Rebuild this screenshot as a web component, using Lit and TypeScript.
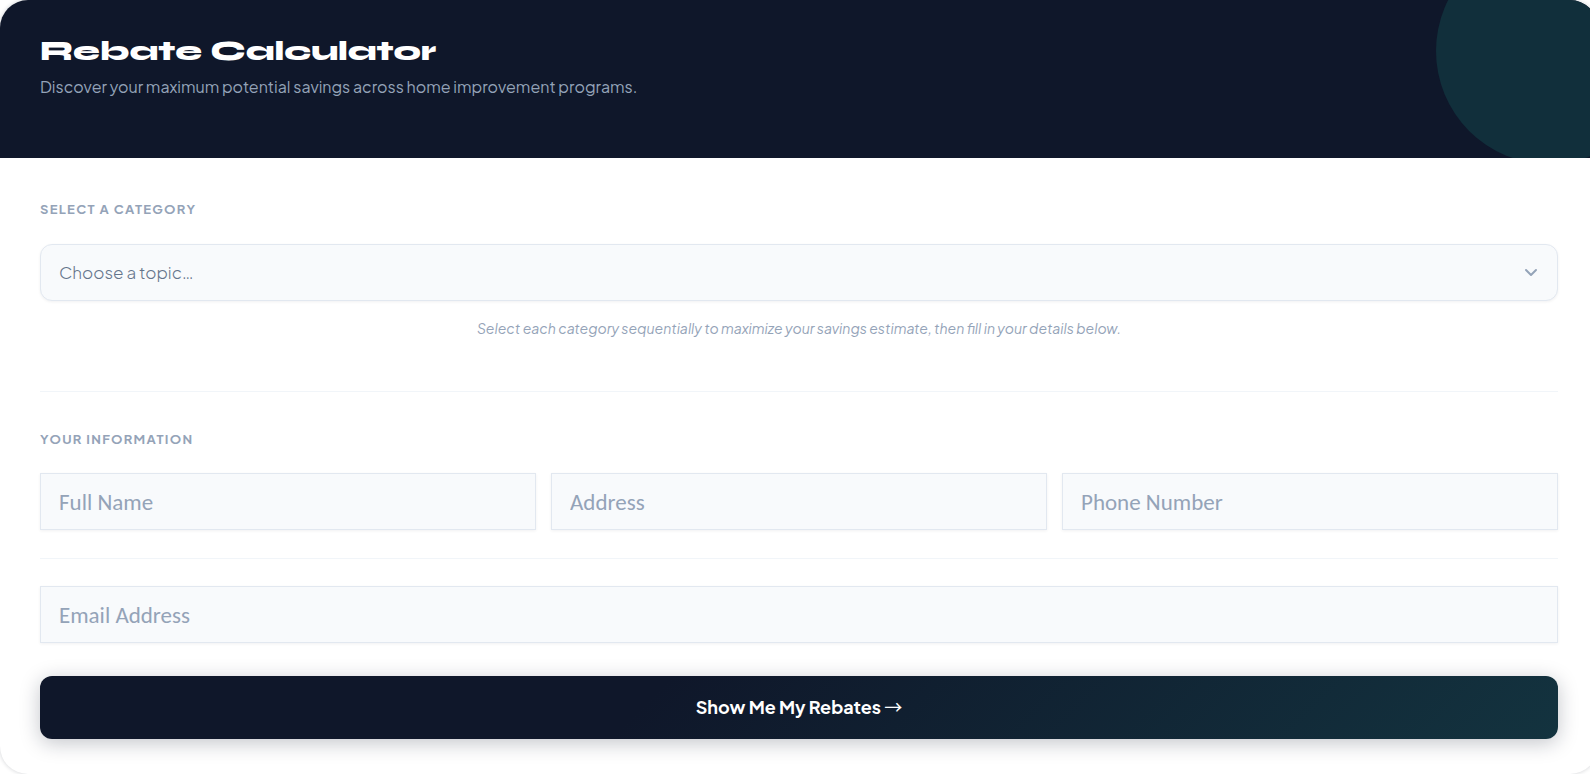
import { LitElement, html, css } from "lit";
import { customElement } from "lit/decorators.js";

@customElement("app-root")
export class AppRoot extends LitElement {
  static styles = css`
    :host {
      display: block;
      overflow: hidden;
      background: #fff;
      font-family: "Plus Jakarta Sans", "Open Sans", sans-serif;
      color: #0f172a;
    }
    * {
      box-sizing: border-box;
    }
    .card {
      width: calc(100% + 8px);
      border-radius: 28px;
      background: #fff;
      overflow: hidden;
      box-shadow: 0 0 4px rgba(15, 23, 42, 0.2);
    }
    .banner {
      position: relative;
      overflow: hidden;
      padding: 32px 40px 58px;
      background: #0f172a;
    }
    .banner::after {
      content: "";
      position: absolute;
      top: -62px;
      right: -64px;
      width: 226px;
      height: 226px;
      border-radius: 50%;
      background: #112f3b;
    }
    h1 {
      margin: 0 0 4px;
      font-family: "Syne", "DejaVu Sans", sans-serif;
      font-size: 27px;
      line-height: 38px;
      font-weight: 800;
      color: #fff;
    }
    .lead {
      margin: 0;
      font-size: 16px;
      line-height: 26px;
      color: #94a3b8;
    }
    form {
      padding: 41px 40px 35px;
    }
    .heading {
      display: block;
      margin: 0 0 24px;
      font-size: 13px;
      line-height: 20px;
      font-weight: 700;
      letter-spacing: 0.1em;
      text-transform: uppercase;
      color: #94a3b8;
    }
    .picker {
      position: relative;
      margin-top: 25px;
    }
    .control {
      display: block;
      width: 100%;
      height: 57px;
      margin: 0;
      padding: 0 18px;
      border: 1px solid #e2e8f0;
      border-radius: 0;
      background: #f8fafc;
      box-shadow: 0 1px 3px rgba(15, 23, 42, 0.06);
      font-family: "Carlito", "Lato", sans-serif;
      font-size: 23px;
      color: #0f172a;
      outline: none;
      appearance: none;
    }
    .control::placeholder {
      color: #94a3b8;
      opacity: 1;
    }
    .control:focus {
      border-color: #94a3b8;
    }
    select.control {
      padding-bottom: 2px;
      border-radius: 12px;
      font-family: inherit;
      font-size: 17px;
      font-weight: 300;
      color: #64748b;
    }
    .chevron {
      position: absolute;
      right: 18px;
      top: 50%;
      width: 18px;
      height: 18px;
      margin-top: -9px;
      pointer-events: none;
    }
    .hint {
      margin: 16px 0 52px;
      font-size: 14px;
      line-height: 22px;
      font-style: italic;
      text-align: center;
      color: #94a3b8;
    }
    hr {
      height: 1px;
      margin: 0;
      border: 0;
      background: #f1f5f9;
    }
    fieldset {
      min-width: 0;
      margin: 0;
      padding: 0;
      border: 0;
    }
    .contact {
      margin: 37px 0 28px;
    }
    legend {
      padding: 0;
    }
    .row {
      display: grid;
      grid-template-columns: repeat(3, minmax(0, 1fr));
      gap: 15px;
    }
    .email {
      margin: 27px 0 33px;
    }
    .submit {
      display: block;
      width: 100%;
      height: 63px;
      padding: 0 0 2px;
      border: 0;
      border-radius: 12px;
      background: linear-gradient(135deg, #0f172a 40%, #13333f 100%);
      box-shadow: 0 4px 20px rgba(15, 23, 42, 0.25);
      font-family: inherit;
      font-size: 18px;
      font-weight: 700;
      color: #fff;
      cursor: pointer;
    }
    .arrow {
      font-family: "Noto Sans CJK JP", sans-serif;
      font-weight: 400;
      line-height: 1;
    }
    @media (max-width: 700px) {
      .row {
        grid-template-columns: minmax(0, 1fr);
      }
    }
  `;

  render() {
    return html`
      <main class="card">
        <header class="banner">
          <h1>Rebate Calculator</h1>
          <p class="lead">Discover your maximum potential savings across home improvement programs.</p>
        </header>
        <form @submit=${(e: Event) => e.preventDefault()}>
          <label class="heading" for="topic">Select a category</label>
          <div class="picker">
            <select class="control" id="topic">
              <option>Choose a topic…</option>
            </select>
            <svg class="chevron" viewBox="0 0 18 18" fill="none" stroke="#94a3b8" stroke-width="2" stroke-linecap="round" stroke-linejoin="round" aria-hidden="true">
              <path d="M4 6l5 5 5-5" />
            </svg>
          </div>
          <p class="hint">Select each category sequentially to maximize your savings estimate, then fill in your details below.</p>
          <hr />
          <fieldset class="contact">
            <legend class="heading">Your information</legend>
            <div class="row">
              <input class="control" type="text" placeholder="Full Name" aria-label="Full Name" />
              <input class="control" type="text" placeholder="Address" aria-label="Address" />
              <input class="control" type="tel" placeholder="Phone Number" aria-label="Phone Number" />
            </div>
          </fieldset>
          <hr />
          <div class="email">
            <input class="control" type="email" placeholder="Email Address" aria-label="Email Address" />
          </div>
          <button class="submit" type="submit">Show Me My Rebates <span class="arrow">→</span></button>
        </form>
      </main>
    `;
  }
}
